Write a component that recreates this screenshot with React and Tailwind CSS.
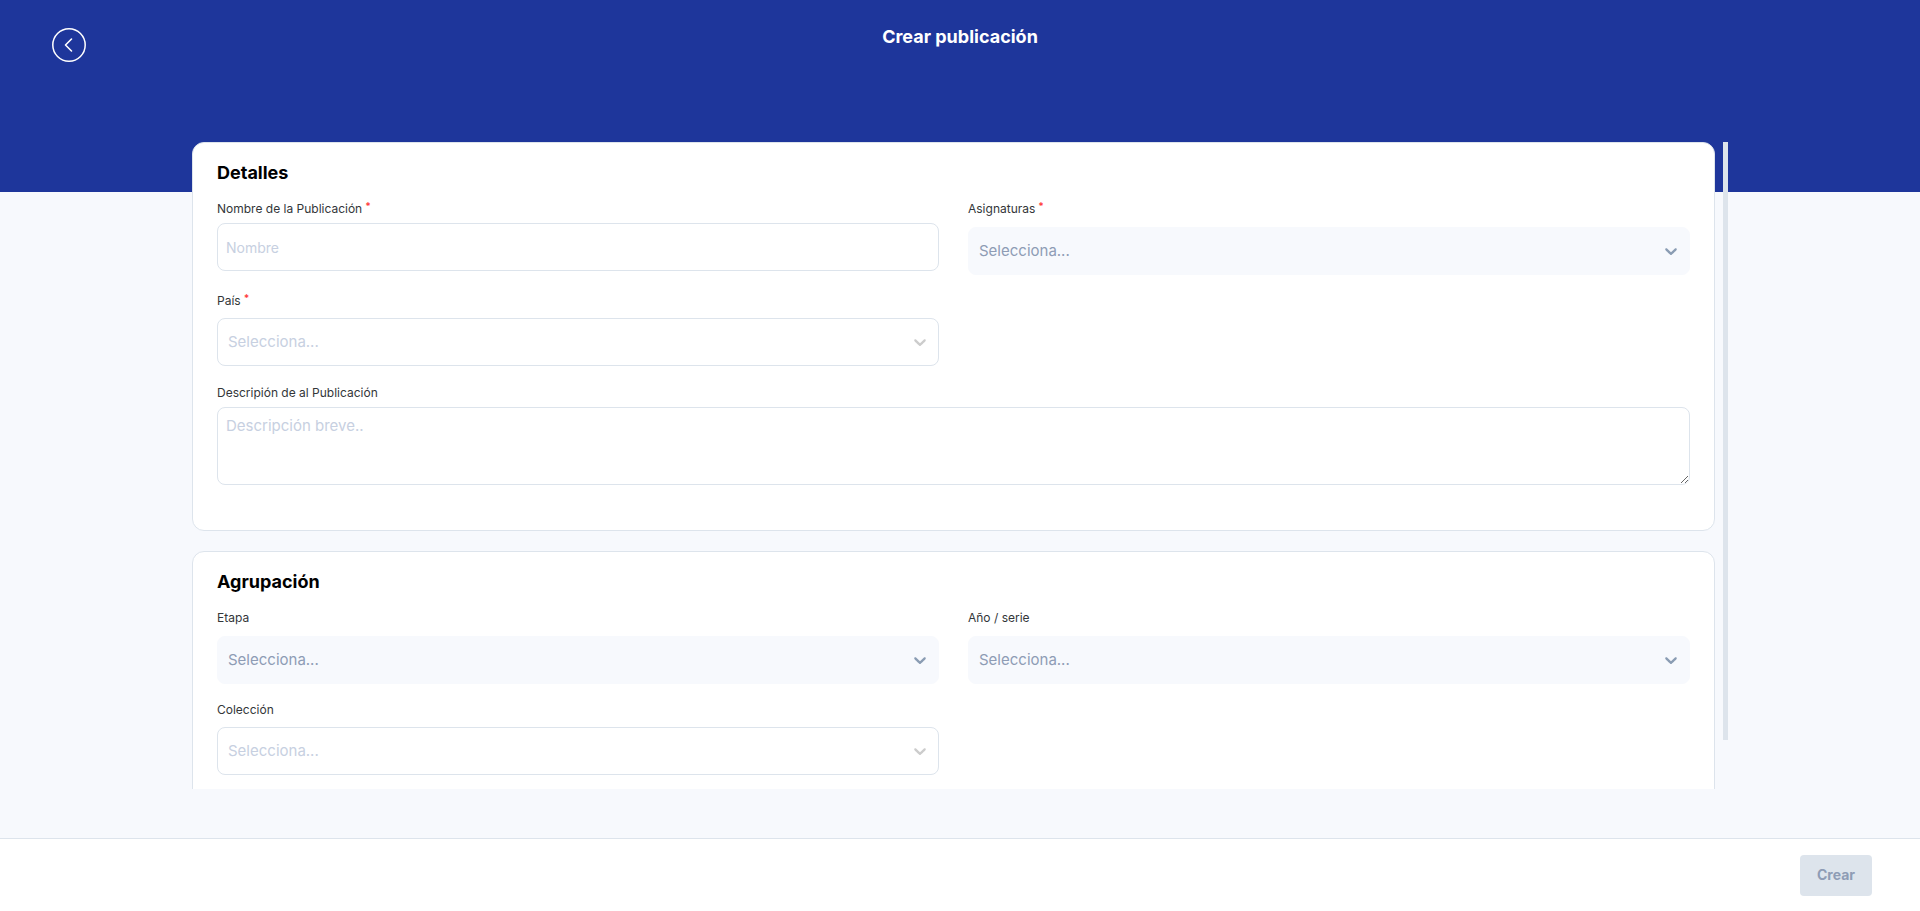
import { useState } from 'react';

function Label({ htmlFor, required, children }) {
  return (
    <label htmlFor={htmlFor} className="flex h-[18px] items-start text-xs leading-[18px] text-[#333639]">
      {children}
      {required && <span className="ml-[3px] text-[10px] leading-3 font-bold text-[#ff4040]">*</span>}
    </label>
  );
}

function SelectField({ id, label, required, filled }) {
  const [value, setValue] = useState('');

  return (
    <div className="h-[92px]">
      <Label htmlFor={id} required={required}>{label}</Label>
      <div className={`relative ${filled ? 'mt-[9px]' : 'mt-2'}`}>
        <select
          id={id}
          value={value}
          onChange={e => setValue(e.target.value)}
          className={`block h-12 w-full appearance-none rounded-lg border pl-[10px] pr-10 text-[15px] ${
            filled
              ? 'border-[#f7f9fd] bg-[#f7f9fd] text-[#8e9cb5]'
              : 'border-[#dde4ec] bg-white text-[#c7d0e1]'
          }`}
        >
          <option value="">Selecciona...</option>
        </select>
        <svg
          viewBox="0 0 20 20"
          aria-hidden="true"
          className={`pointer-events-none absolute right-[9px] top-[14px] size-5 fill-current ${
            filled ? 'text-[#8a9cb3]' : 'text-[#cccccc]'
          }`}
        >
          <path d="M4.516 7.548c0.436-0.446 1.043-0.481 1.576 0l3.908 3.747 3.908-3.747c0.533-0.481 1.141-0.446 1.574 0 0.436 0.445 0.408 1.197 0 1.615-0.406 0.418-4.695 4.502-4.695 4.502-0.217 0.223-0.502 0.335-0.787 0.335s-0.57-0.112-0.789-0.335c0 0-4.287-4.084-4.695-4.502s-0.436-1.17 0-1.615z" />
        </svg>
      </div>
    </div>
  );
}

function Card({ title, children }) {
  return (
    <section className="mb-5 rounded-xl border border-[#dde4ec] bg-white px-6 pb-6 pt-4">
      <h2 className="mb-[13px] text-lg leading-7 font-bold text-black">{title}</h2>
      <div className="grid grid-cols-2 gap-x-[29px]">{children}</div>
    </section>
  );
}

export default function App() {
  const [form, setForm] = useState({ nombre: '', descripcion: '' });

  return (
    <div className="flex h-screen flex-col bg-[#f7f9fd] font-['Inter',sans-serif]">
      <header className="grid h-48 shrink-0 grid-cols-[1fr_auto_1fr] items-start bg-[#1e369b] px-[52px] pt-[23px]">
        <button type="button" aria-label="Volver" className="mt-[5px] size-[34px] text-white">
          <svg viewBox="0 0 34 34" fill="none" stroke="currentColor" className="size-full">
            <circle cx="17" cy="17" r="16.2" strokeWidth="1.5" />
            <path d="M19.5 11 13.5 17l6 6" strokeWidth="1.6" strokeLinecap="round" strokeLinejoin="round" />
          </svg>
        </button>
        <h1 className="text-lg leading-7 font-bold text-white">Crear publicación</h1>
      </header>

      <main className="relative -mt-[50px] flex min-h-0 flex-1 px-[10%] pb-[49px]">
        <form
          id="publicacion"
          onSubmit={e => e.preventDefault()}
          className="min-w-0 flex-1 overflow-y-auto [scrollbar-width:none]"
        >
          <Card title="Detalles">
            <div className="h-[92px]">
              <Label htmlFor="nombre" required>Nombre de la Publicación</Label>
              <input
                id="nombre"
                type="text"
                placeholder="Nombre"
                value={form.nombre}
                onChange={e => setForm({ ...form, nombre: e.target.value })}
                className="mt-[5px] block h-12 w-full rounded-lg border border-[#dde4ec] px-2 text-sm placeholder:text-[#c7d0e1]"
              />
            </div>
            <SelectField id="asignaturas" label="Asignaturas" required filled />
            <SelectField id="pais" label="País" required />
            <div className="col-span-2 h-[122px]">
              <Label htmlFor="descripcion">Descripión de al Publicación</Label>
              <textarea
                id="descripcion"
                placeholder="Descripción breve.."
                value={form.descripcion}
                onChange={e => setForm({ ...form, descripcion: e.target.value })}
                className="mt-[5px] block h-[78px] w-full resize rounded-lg border border-[#dde4ec] px-2 py-[7px] text-[15px] leading-[22px] placeholder:text-[#c7d0e1]"
              />
            </div>
          </Card>

          <Card title="Agrupación">
            <SelectField id="etapa" label="Etapa" filled />
            <SelectField id="serie" label="Año / serie" filled />
            <SelectField id="coleccion" label="Colección" />
          </Card>
        </form>

        {/* Scroll indicator */}
        <div className="ml-2 w-[5px] shrink-0">
          <div className="h-[92.5%] bg-[#dde4ec]" />
        </div>
      </main>

      <footer className="flex h-[73px] shrink-0 items-center justify-end border-t border-[#dde4ec] bg-white px-12">
        <button
          type="submit"
          form="publicacion"
          disabled
          className="h-[41px] w-[72px] rounded bg-[#dde4ec] text-sm font-bold text-[#8e9cb5]"
        >
          Crear
        </button>
      </footer>
    </div>
  );
}
